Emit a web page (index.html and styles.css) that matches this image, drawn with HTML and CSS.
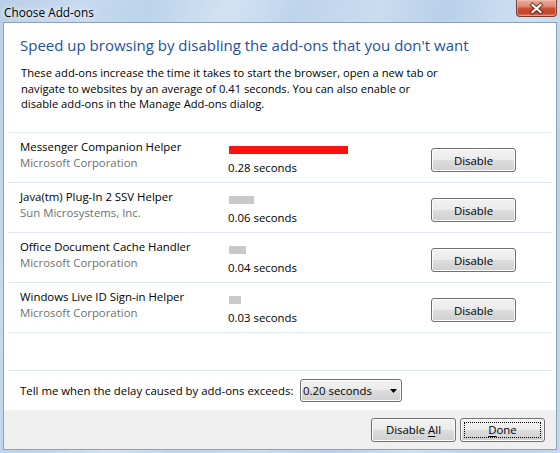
FILE: index.html
```html
<!DOCTYPE html>
<html lang="en">
<head>
<meta charset="utf-8">
<title>Choose Add-ons</title>
<link rel="stylesheet" href="styles.css">
</head>
<body>
<div class="window">
  <div class="titlebar">
    <span class="title">Choose Add-ons</span>
    <div class="close" aria-label="Close">
      <svg width="41" height="17" viewBox="0 0 41 17">
        <path d="M16.5 5 L24.5 12 M24.5 5 L16.5 12" stroke="#4a1c12" stroke-width="4.2" stroke-linecap="square" fill="none" opacity="0.75"/>
        <path d="M16.5 5 L24.5 12 M24.5 5 L16.5 12" stroke="#ffffff" stroke-width="2.2" stroke-linecap="square" fill="none"/>
      </svg>
    </div>
  </div>
  <div class="client">
    <div class="intro">
      <h1 class="instruction">Speed up browsing by disabling the add-ons that you don't want</h1>
      <p class="desc">These add-ons increase the time it takes to start the browser, open a new tab or<br>navigate to websites by an average of 0.41 seconds. You can also enable or<br>disable add-ons in the Manage Add-ons dialog.</p>
    </div>
    <ul class="addons">
      <li class="addon">
        <div class="info"><div class="name">Messenger Companion Helper</div><div class="company">Microsoft Corporation</div></div>
        <div class="timing"><div class="bar bar-high" style="width:119px"></div><div class="time">0.28 seconds</div></div>
        <button class="btn">Disable</button>
      </li>
      <li class="addon">
        <div class="info"><div class="name">Java(tm) Plug-In 2 SSV Helper</div><div class="company">Sun Microsystems, Inc.</div></div>
        <div class="timing"><div class="bar" style="width:25px"></div><div class="time">0.06 seconds</div></div>
        <button class="btn">Disable</button>
      </li>
      <li class="addon">
        <div class="info"><div class="name">Office Document Cache Handler</div><div class="company">Microsoft Corporation</div></div>
        <div class="timing"><div class="bar" style="width:17px"></div><div class="time">0.04 seconds</div></div>
        <button class="btn">Disable</button>
      </li>
      <li class="addon">
        <div class="info"><div class="name">Windows Live ID Sign-in Helper</div><div class="company">Microsoft Corporation</div></div>
        <div class="timing"><div class="bar" style="width:12px"></div><div class="time">0.03 seconds</div></div>
        <button class="btn">Disable</button>
      </li>
    </ul>
    <div class="spacer"></div>
    <div class="threshold">
      <span class="threshold-label">Tell me when the delay caused by add-ons exceeds:</span>
      <div class="combo">
        <span>0.20 seconds</span>
        <svg width="7" height="4" viewBox="0 0 7 4"><polygon points="0,0 7,0 3.5,4" fill="#000"/></svg>
      </div>
    </div>
    <div class="footer">
      <button class="btn">Disable <u>A</u>ll</button>
      <button class="btn btn-default"><u>D</u>one</button>
    </div>
  </div>
</div>
</body>
</html>
```

FILE: styles.css
```css
* { box-sizing: border-box; }

html, body {
  margin: 0;
  padding: 0;
}

body {
  width: 560px;
  height: 453px;
  overflow: hidden;
  font-family: "Open Sans", "Noto Sans", sans-serif;
  font-size: 11.4px;
  color: #000;
}

.window {
  width: 560px;
  height: 453px;
  display: flex;
  flex-direction: column;
  padding: 0 3px 3px;
  background:
    linear-gradient(105deg,
      #b8cfe8 0%, #c6daef 12%, #bcd3eb 22%, #d2e2f3 34%, #bed4ec 44%,
      #c9dcf0 56%, #b9d0e9 66%, #cfe0f2 78%, #bbd2ea 88%, #c4d8ee 100%);
}

.titlebar {
  height: 22px;
  display: flex;
  justify-content: space-between;
  align-items: flex-start;
}

.title {
  padding: 1px 0 0 1px;
  line-height: 22px;
  font-size: 11.8px;
  color: #000;
  text-shadow: 0 0 6px rgba(255, 255, 255, 0.95), 0 0 10px rgba(255, 255, 255, 0.8);
}

.close {
  width: 41px;
  height: 17px;
  border: 1px solid #7a3a2e;
  border-top: none;
  border-radius: 0 0 4px 4px;
  background: linear-gradient(#eca999 0%, #de8a76 40%, #cc5137 52%, #c6412a 80%, #d8755a 100%);
  box-shadow: inset 0 0 0 1px rgba(255, 210, 200, 0.45);
  display: flex;
  align-items: center;
  justify-content: center;
  overflow: hidden;
}

.close svg {
  display: block;
  flex: 0 0 auto;
}

.client {
  flex: 1;
  background: #fff;
  border: 1px solid #8ba2bd;
  display: flex;
  flex-direction: column;
}

.intro {
  padding: 12px 16px 0 16px;
}

.instruction {
  margin: 0;
  font-size: 15px;
  font-weight: normal;
  line-height: 20px;
  color: #1e50a2;
}

.desc {
  margin: 10px 0 0 1px;
  font-size: 11.2px;
  line-height: 15.5px;
}

.addons {
  list-style: none;
  margin: 20.5px 4px 0;
  padding: 0;
  border-bottom: 1px solid #dfe8f1;
}

.addon {
  display: grid;
  grid-template-columns: 208px 1fr 85px;
  align-items: start;
  height: 50px;
  border-top: 1px solid #dfe8f1;
  padding: 6px 36px 0 12px;
}

.name,
.company {
  line-height: 16px;
  white-space: nowrap;
}

.company {
  color: #6f6f6f;
}

.bar {
  height: 8px;
  margin: 7px 0 0 1px;
  background: #c9c9c9;
}

.bar-high {
  background: #fd1010;
}

.time {
  margin-top: 6px;
  line-height: 16px;
}

.btn {
  font: inherit;
  color: #000;
  width: 85px;
  height: 24px;
  padding: 0;
  border: 1px solid #707070;
  border-radius: 3px;
  background: linear-gradient(#f2f2f2 0%, #ebebeb 50%, #dddddd 50%, #cfcfcf 100%);
  box-shadow: inset 0 0 0 1px #fcfcfc;
}

.addon .btn {
  margin-top: 9px;
}

.btn u {
  text-decoration: underline;
  text-underline-offset: 2px;
}

.btn-default {
  position: relative;
}

.btn-default::after {
  content: "";
  position: absolute;
  inset: 3px;
  border: 1px dotted #000;
}

.spacer {
  flex: 1;
}

.threshold {
  height: 40px;
  margin: 0 4px;
  border-top: 1px solid #dfe8f1;
  display: flex;
  align-items: center;
  padding-left: 12px;
}

.threshold-label {
  width: 280px;
  white-space: nowrap;
}

.combo {
  width: 102px;
  height: 23px;
  border: 1px solid #707070;
  border-radius: 3px;
  background: linear-gradient(#f2f2f2 0%, #ebebeb 50%, #dddddd 50%, #cfcfcf 100%);
  box-shadow: inset 0 0 0 1px #fcfcfc;
  display: flex;
  align-items: center;
  justify-content: space-between;
  padding: 0 4px 0 2px;
}

.combo svg {
  display: block;
}

.footer {
  height: 39px;
  background: #efefef;
  display: flex;
  justify-content: flex-end;
  align-items: center;
  gap: 4px;
  padding-right: 11px;
}
```
